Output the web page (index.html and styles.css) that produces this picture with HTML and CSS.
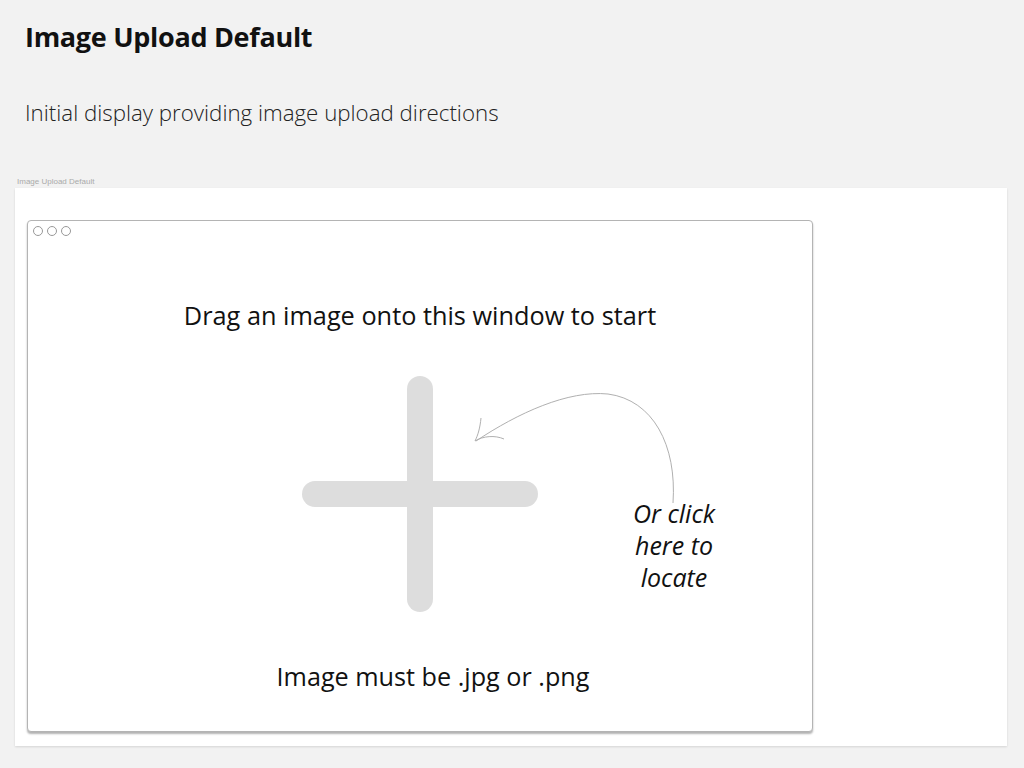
FILE: index.html
```html
<!DOCTYPE html>
<html>
<head>
<meta charset="utf-8">
<link rel="stylesheet" href="styles.css">
</head>
<body>
<header class="page-head">
  <h1 class="title">Image Upload Default</h1>
  <p class="subtitle">Initial display providing image upload directions</p>
</header>
<div class="artboard-label">Image Upload Default</div>
<section class="artboard">
  <div class="window">
    <div class="dots">
      <span class="dot"></span><span class="dot"></span><span class="dot"></span>
    </div>
    <p class="drag-text">Drag an image onto this window to start</p>
    <svg class="plus" width="236" height="236" viewBox="0 0 236 236">
      <rect x="105" y="0" width="26" height="236" rx="13" fill="#dddddd"/>
      <rect x="0" y="105" width="236" height="26" rx="13" fill="#dddddd"/>
    </svg>
    <p class="format-text">Image must be .jpg or .png</p>
    <svg class="arrow" width="260" height="165" viewBox="0 0 260 165">
      <path d="M225 158 C 229 100, 205 55, 160 49 C 120 45, 70 68, 28 96" fill="none" stroke="#b0b0b0" stroke-width="1"/>
      <path d="M33 73 C 32 83, 30 90, 27 96 C 35 91, 47 90, 56 94" fill="none" stroke="#b0b0b0" stroke-width="1"/>
    </svg>
    <p class="note">Or click<br>here to<br>locate</p>
  </div>
</section>
</body>
</html>
```
FILE: styles.css
```css
html, body {
  margin: 0;
  padding: 0;
  background: #f2f2f2;
}
body {
  font-family: "Open Sans", "Noto Sans", sans-serif;
  color: #111;
  height: 768px;
  overflow: hidden;
}
.page-head {
  padding: 18px 25px 0;
}
.title {
  margin: 0;
  font-size: 27px;
  font-weight: 700;
  line-height: 38px;
  letter-spacing: -0.3px;
}
.subtitle {
  margin: 43px 0 0;
  font-size: 22.3px;
  font-weight: 300;
  line-height: 28px;
  color: #222;
}
.artboard-label {
  margin: 50px 0 0 17px;
  font-family: "Liberation Sans", sans-serif;
  font-size: 8px;
  line-height: 10px;
  color: #aaa;
}
.artboard {
  box-sizing: border-box;
  margin: 1px 0 0 15px;
  width: 992px;
  height: 558px;
  padding: 32px 0 0 12px;
  background: #fff;
  box-shadow: 0 1px 2px rgba(0,0,0,0.12);
}
.window {
  position: relative;
  box-sizing: border-box;
  width: 786px;
  height: 512px;
  border: 1px solid #b4b4b4;
  border-radius: 4px;
  background: #fff;
  box-shadow: 0 2px 2px rgba(0,0,0,0.3);
  display: flex;
  flex-direction: column;
  align-items: center;
}
.dots {
  align-self: flex-start;
  display: flex;
  gap: 4px;
  padding: 5px 0 0 5px;
}
.dot {
  width: 8px;
  height: 8px;
  border: 1px solid #999;
  border-radius: 50%;
}
.drag-text {
  margin: 63px 0 0;
  font-size: 25.3px;
  line-height: 32px;
  color: #111;
}
.plus {
  display: block;
  margin-top: 45px;
}
.format-text {
  margin: 48px 0 0 26px;
  font-size: 25.2px;
  line-height: 32px;
  color: #111;
}
.arrow {
  position: absolute;
  left: 420px;
  top: 124px;
}
.note {
  position: absolute;
  left: 581px;
  top: 276px;
  width: 130px;
  margin: 0;
  text-align: center;
  font-size: 25px;
  font-style: italic;
  line-height: 32px;
  color: #111;
}
```
